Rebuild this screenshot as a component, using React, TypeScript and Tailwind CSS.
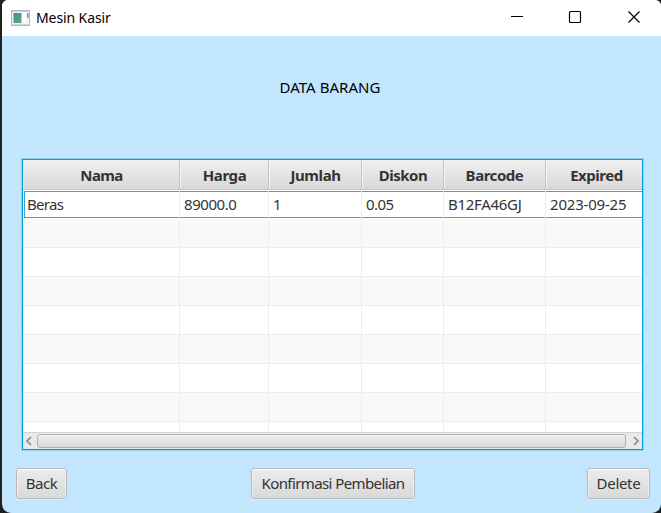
const columns = [
  { label: "Nama", value: "Beras", width: "w-[157px]", head: "pl-px tracking-[-0.6px]", cell: "tracking-[-0.7px]" },
  { label: "Harga", value: "89000.0", width: "w-[89px]", head: "pl-px tracking-[-0.4px]", cell: "tracking-[-0.45px]" },
  { label: "Jumlah", value: "1", width: "w-[93px]", head: "pl-px tracking-[-0.4px]", cell: "tracking-[-0.3px]" },
  { label: "Diskon", value: "0.05", width: "w-[82px]", head: "pl-px tracking-[-0.5px]", cell: "tracking-[-0.6px]" },
  { label: "Barcode", value: "B12FA46GJ", width: "w-[102px]", head: "tracking-[-0.45px]", cell: "tracking-[-0.3px]" },
  { label: "Expired", value: "2023-09-25", width: "w-[102px]", head: "tracking-[-0.45px]", cell: "tracking-[-0.2px]" },
];

function TitleBar() {
  return (
    <header className="flex h-9 shrink-0 items-center bg-white pl-[9px] text-black">
      <svg width="19" height="16" viewBox="0 0 19 16" aria-hidden="true">
        <defs>
          <linearGradient id="pane" x1="0" y1="0" x2="1" y2="1">
            <stop offset="0" stopColor="#4b7fb4" />
            <stop offset="1" stopColor="#58b477" />
          </linearGradient>
        </defs>
        <rect x="0.5" y="0.5" width="18" height="15" fill="#f3f3f5" stroke="#b4b6bd" />
        <path d="M1 1.500h17" stroke="#cfd0d6" />
        <rect x="2.500" y="3" width="8" height="10" fill="url(#pane)" />
        <rect x="11" y="3" width="4" height="10" fill="#fff" />
        <path d="M16 3h1.500v6l-1.500-2z" fill="#5ba39a" />
        <path d="M1 14.500h17" stroke="#d6d6da" />
      </svg>
      <h1 className="ml-[6px] flex-1 text-[14px] leading-5 tracking-[-0.1px]">Mesin Kasir</h1>
      <svg width="151" height="36" viewBox="0 0 151 36" fill="none" stroke="#000" aria-hidden="true">
        <path d="M1 16.500h12" />
        <rect x="59.500" y="11.500" width="11" height="11" rx="1" strokeWidth="1.2" />
        <path d="M118.500 11.500l11 11M129.500 11.500l-11 11" strokeWidth="1.2" />
      </svg>
    </header>
  );
}

function PushButton({ label, className }: { label: string; className: string }) {
  return (
    <button
      className={
        "h-[31px] rounded-[3px] border border-[#b8b8b8] bg-linear-to-b from-[#ececec] to-[#d9d9d9] text-center text-[15px] leading-[29px] whitespace-nowrap text-[#333] shadow-[inset_0_1px_0_#fbfbfb,inset_1px_0_0_#efefef,inset_-1px_0_0_#efefef,0_1px_0_#d9efff] " +
        className
      }
    >
      {label}
    </button>
  );
}

function DataTable() {
  return (
    <section className="ml-[20px] flex h-[291px] w-[621px] shrink-0 flex-col overflow-hidden border border-[#039ed3] bg-white text-[15px] text-[#333] shadow-[0_0_0_1px_#8fd3f0]">
      <div className="flex h-[30px] w-[625px] shrink-0 border-b border-[#c4c4c4] bg-linear-to-b from-[#efefef] to-[#d9d9d9]">
        {columns.map((c) => (
          <div key={c.label} className={"shrink-0 border-r border-[#c4c4c4] text-center leading-[30px] font-bold shadow-[inset_1px_1px_0_#f3f3f3] " + c.width + " " + c.head}>
            {c.label}
          </div>
        ))}
      </div>
      <div className="flex h-[29px] w-[625px] shrink-0 pt-px">
        {columns.map((c, i) => (
          <div key={c.label} className={"flex h-7 shrink-0 border-r border-[#ededed] " + c.width}>
            <div className={"h-[27px] flex-1 border-y border-[#30a6cf] leading-[24px] " + (i === 0 ? "ml-px border-l pl-[2px] " : "pl-1 ") + c.cell}>
              {c.value}
            </div>
          </div>
        ))}
      </div>
      <div className="min-h-0 flex-1 overflow-hidden">
        {[0, 1, 2, 3, 4, 5, 6, 7].map((n) => (
          <div key={n} className={"flex h-[29px] w-[625px] border-b border-[#ededed] " + (n % 2 === 0 ? "bg-[#f9f9f9]" : "bg-white")}>
            {columns.map((c) => (
              <div key={c.label} className={"shrink-0 border-r border-[#ededed] " + c.width} />
            ))}
          </div>
        ))}
      </div>
      <div className="flex h-[17px] shrink-0 items-center border-t border-[#d3d3d3] bg-[#e9e9e9]">
        <svg width="14" height="16" viewBox="0 0 14 16" fill="none" stroke="#858585" strokeWidth="1.5" aria-hidden="true">
          <path d="M8 4L4 8l4 4" />
        </svg>
        <div className="h-[14px] w-[589px] rounded-[3px] border border-[#b2b2b2] bg-linear-to-b from-[#ededed] to-[#dadada] shadow-[inset_0_1px_0_#f7f7f7]" />
        <svg width="16" height="16" viewBox="0 0 16 16" fill="none" stroke="#858585" strokeWidth="1.5" aria-hidden="true">
          <path d="M8 4l4 4-4 4" />
        </svg>
      </div>
    </section>
  );
}

export default function App() {
  return (
    <div className="h-[513px] w-[661px] overflow-hidden bg-[#202020] pl-[2px] font-['Noto_Sans','Open_Sans',sans-serif]">
      <main className="flex h-full w-[659px] flex-col overflow-hidden rounded-t-[6px] rounded-b-[9px] bg-[#c3e6ff]">
        <TitleBar />
        <h2 className="mt-[41px] mb-[62px] pr-[3px] text-center text-[15px] leading-5 tracking-[0.05px] text-black">DATA BARANG</h2>
        <DataTable />
        <footer className="mt-[18px] flex justify-between pr-[11px] pl-[14px]">
          <PushButton label="Back" className="w-[51px] tracking-[-0.5px]" />
          <PushButton label="Konfirmasi Pembelian" className="ml-[12px] w-[164px] tracking-[-0.6px]" />
          <PushButton label="Delete" className="w-[63px] tracking-[-0.3px]" />
        </footer>
      </main>
    </div>
  );
}
